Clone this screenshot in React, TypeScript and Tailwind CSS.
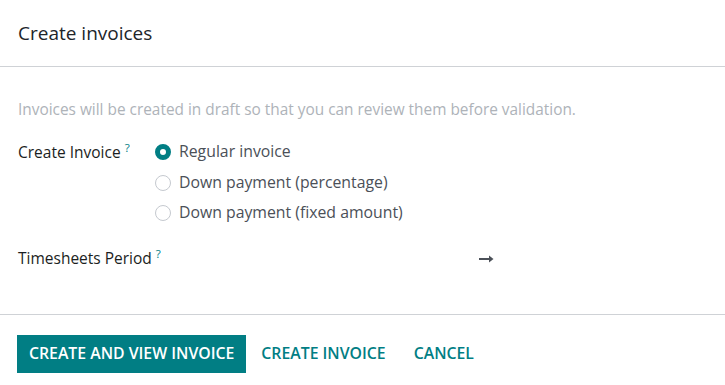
import React from "react";

function Radio({ checked, label }: { checked?: boolean; label: string }) {
  return (
    <div className="flex items-center gap-2 h-[30.5px]">
      <span
        className={`w-4 h-4 rounded-full bg-white ${
          checked ? "border-[5px] border-[#017e84]" : "border border-[#c5c9cf]"
        }`}
      />
      <span className="text-[15.8px] text-[#4b5058]">{label}</span>
    </div>
  );
}

export default function App() {
  return (
    <div className="w-[725px] h-[385px] bg-white font-['Open_Sans',sans-serif] text-[#374151] overflow-hidden">
      {/* Header */}
      <div className="h-[67px] flex items-center px-[18px] border-b border-[#cfd2d6]">
        <h4 className="text-[19px] text-[#212529]">Create invoices</h4>
      </div>

      {/* Body */}
      <div className="px-[18px] pt-[33px] h-[248px] border-b border-[#cfd2d6]">
        <p className="text-[15.4px] text-[#aeb3b9] leading-[20px]">
          Invoices will be created in draft so that you can review them before validation.
        </p>
        <div className="flex mt-[17px]">
          <div className="w-[137px] pt-[4px] text-[15.5px] font-medium text-[#1b1e22]">
            Create Invoice<sup className="text-[#017e84] ml-1">?</sup>
          </div>
          <div className="flex flex-col">
            <Radio checked label="Regular invoice" />
            <Radio label="Down payment (percentage)" />
            <Radio label="Down payment (fixed amount)" />
          </div>
        </div>
        <div className="flex items-center mt-[18px]">
          <div className="w-[461px] text-[15.5px] font-medium text-[#1b1e22]">
            Timesheets Period<sup className="text-[#017e84] ml-1">?</sup>
          </div>
          <svg width="15" height="10" viewBox="0 0 15 10" className="mt-[2px]">
            <path d="M0 5h11" stroke="#4b5058" strokeWidth="2" />
            <path d="M10 1.5L14.5 5L10 8.5z" fill="#4b5058" />
          </svg>
        </div>
      </div>

      {/* Footer */}
      <div className="flex items-center px-[17px] pt-[20px]">
        <button className="h-[38px] px-[12px] bg-[#017e84] text-white text-[15.8px] font-semibold uppercase">
          Create and view invoice
        </button>
        <button className="text-[15.8px] font-semibold uppercase text-[#017e84] ml-[15px]">
          Create invoice
        </button>
        <button className="text-[15.8px] font-semibold uppercase text-[#017e84] ml-[28px]">
          Cancel
        </button>
      </div>
    </div>
  );
}
